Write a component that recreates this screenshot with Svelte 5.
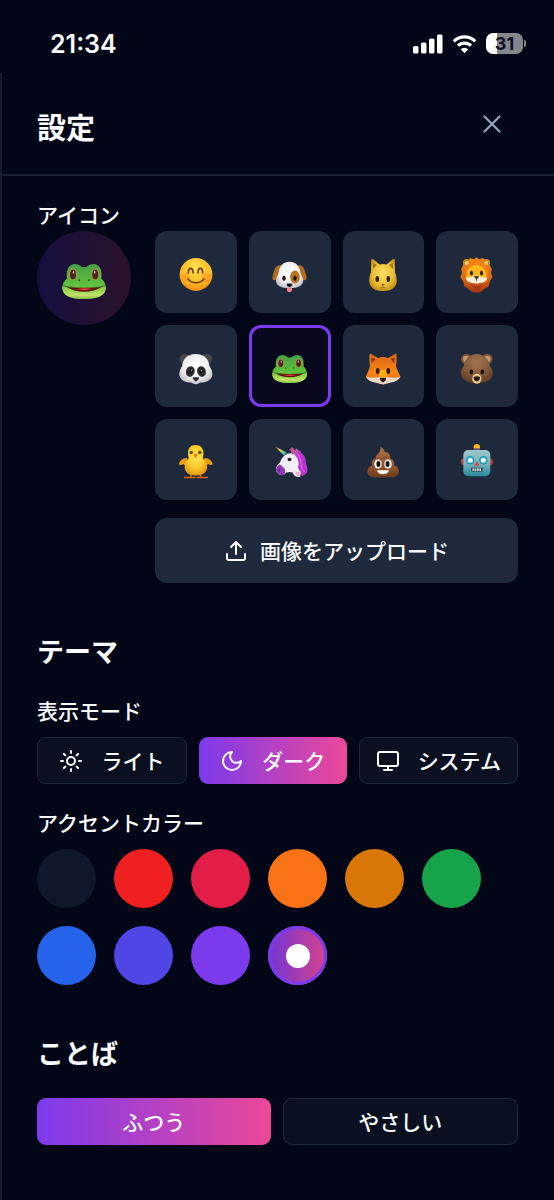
<script lang="ts">
	const avatars = [
		{ id: 'smile', label: 'にこにこ' },
		{ id: 'dog', label: 'いぬ' },
		{ id: 'cat', label: 'ねこ' },
		{ id: 'lion', label: 'ライオン' },
		{ id: 'panda', label: 'パンダ' },
		{ id: 'frog', label: 'かえる' },
		{ id: 'fox', label: 'きつね' },
		{ id: 'bear', label: 'くま' },
		{ id: 'chick', label: 'ひよこ' },
		{ id: 'unicorn', label: 'ユニコーン' },
		{ id: 'poop', label: 'うんち' },
		{ id: 'robot', label: 'ロボット' }
	];

	const modes = [
		{ id: 'light', label: 'ライト' },
		{ id: 'dark', label: 'ダーク' },
		{ id: 'system', label: 'システム' }
	];

	const accents = ['slate', 'red', 'rose', 'orange', 'amber', 'green', 'blue', 'indigo', 'violet', 'gradient'];

	const wordings = [
		{ id: 'normal', label: 'ふつう' },
		{ id: 'easy', label: 'やさしい' }
	];

	let avatar = $state('frog');
	let mode = $state('dark');
	let accent = $state('gradient');
	let wording = $state('normal');
</script>

{#snippet face(id: string)}
	<svg class="face" viewBox="0 0 36 36" aria-hidden="true">
		{#if id === 'smile'}
			<circle cx="18" cy="17.5" r="16.4" fill="url(#g-smile)" />
			<circle cx="7.5" cy="20.5" r="4.5" fill="#ff8a1f" opacity=".45" />
			<circle cx="28.5" cy="20.5" r="4.5" fill="#ff8a1f" opacity=".45" />
			<path d="M10.3 15.8q.3-4.4 2.4-4.4t2.4 4.4M19.9 15.8q.3-4.4 2.4-4.4t2.4 4.4" fill="none" stroke="#6b3d05" stroke-width="1.7" stroke-linecap="round" />
			<path d="M10 22q3 3.8 8 3.8t8-3.8" fill="none" stroke="#6b3d05" stroke-width="1.5" stroke-linecap="round" />
		{:else if id === 'dog'}
			<path d="M9.5 8.5Q4 7.5 2.5 13 .2 18.5.4 22q2 2.5 4.6.2L10 14Z" fill="#b06c1c" />
			<path d="M25.5 8.5Q31 7.5 32.5 13q2.3 5.5 2.1 9-2 2.5-4.6.2L25 14Z" fill="#b06c1c" />
			<path d="M17.5 4.8c6 0 9.8 3.7 10.7 10 .5 3.5 3 5.2 3 9 0 4.5-4.4 7.4-13.7 7.4S4 28.3 4 23.8c0-3.8 2.3-5.5 2.8-9 .9-6.3 4.7-10 10.7-10Z" fill="url(#g-white)" />
			<ellipse cx="23" cy="20" rx="4.8" ry="6.4" fill="#b9711d" />
			<ellipse cx="12" cy="21.3" rx="1.7" ry="2.8" fill="#24170f" />
			<ellipse cx="23" cy="21.3" rx="1.7" ry="2.8" fill="#24170f" />
			<path d="M14.8 26.5h5.4q.8 2.6-2.7 3.8-3.5-1.2-2.7-3.8Z" fill="#1b1717" />
			<path d="M15 30.7h5v2.5q-.4 2-2.5 2T15 33.2Z" fill="#f4808e" />
		{:else if id === 'cat'}
			<path d="M6.2 3q.5-2 2.3-.5L14.5 7.5q3.5-1 7 0l6-5q1.8-1.500 2.300.5l.2 12q2 4 1.800 9.500Q30.500 34 18 34T4.200 24.500Q4 19 6 15Z" fill="url(#g-cat)" />
			<path d="M7.8 5.5 8 12l4-4ZM28.2 5.5 28 12l-4-4Z" fill="#a97b10" />
			<ellipse cx="12.3" cy="22" rx="1.8" ry="3" fill="#33250b" />
			<ellipse cx="23.3" cy="22" rx="1.8" ry="3" fill="#33250b" />
			<path d="M16.3 27h3.4L18 29Z" fill="#8e4d1c" />
			<path d="M15.5 31q2 .4 2.5-1.4.5 1.8 2.5 1.4" fill="none" stroke="#8a5a0b" stroke-width=".8" />
		{:else if id === 'lion'}
			<path d="m17.5.2 2.500 2 4-1.200 2 2.300 4 1.200.8 3.800 2 3.700-.8 4 1.500 4-2.500 4-1.500 5.500-3.500 2-4.500 3.800-4 .4-4-.4-4.500-3.800-3.500-2L4 24l-2.800-4 1.800-4-.8-4 2-3.700L5 4.500l4-1.200L11 1l4 1.200Z" fill="url(#g-lion)" />
			<circle cx="7.5" cy="5.5" r="3.5" fill="#d18618" />
			<circle cx="27.5" cy="5.5" r="3.5" fill="#d18618" />
			<circle cx="7.8" cy="6" r="2" fill="#f3c76b" />
			<circle cx="27.2" cy="6" r="2" fill="#f3c76b" />
			<path d="M17.5 3Q7 5 5.500 16l4 9h16l4-9Q28 5 17.500 3Z" fill="#f18213" />
			<path d="M17.5 8c6 0 10 5 10 12q-3 5-10 5t-10-5c0-7 4-12 10-12Z" fill="#fdb81c" />
			<path d="M6.5 20q5.5 1.5 9-1.5h4q3.5 3 9 1.5-.5 6.5-11 6.500T6.500 20Z" fill="#fff1d8" />
			<ellipse cx="12.5" cy="16" rx="1.5" ry="2.6" fill="#33200e" />
			<ellipse cx="22.5" cy="16" rx="1.5" ry="2.6" fill="#33200e" />
			<path d="M15.2 19.5h4.6l-2.3 2.8Zm2.3 2.5v2.5" fill="#35200f" stroke="#35200f" stroke-width=".6" />
			<path d="M12 27.5q5.5 3 11 0L17.5 34Z" fill="#a33a15" />
		{:else if id === 'panda'}
			<circle cx="6.8" cy="8" r="5.3" fill="#45474c" />
			<circle cx="28.8" cy="8" r="5.3" fill="#45474c" />
			<path d="M17.8 3c8.7 0 13 5 13.6 12 1.5 2.5 3 4.5 3 8 0 6-6 8.5-11.5 8.5-1.5 0-2.5 1.8-5.1 1.8s-3.6-1.8-5.1-1.8C7.2 31.5 1.3 29 1.3 23c0-3.5 1.4-5.5 2.9-8C4.8 8 9 3 17.8 3Z" fill="url(#g-white)" />
			<ellipse cx="12.3" cy="20.5" rx="4.3" ry="5.4" transform="rotate(20 12.3 20.5)" fill="#292b2d" />
			<ellipse cx="23.5" cy="20.5" rx="4.3" ry="5.4" transform="rotate(-20 23.5 20.5)" fill="#292b2d" />
			<circle cx="13" cy="20.5" r="1.5" fill="#050505" />
			<circle cx="22.8" cy="20.5" r="1.5" fill="#050505" />
			<circle cx="13.4" cy="19.7" r=".6" fill="#ddd" />
			<circle cx="23.2" cy="19.7" r=".6" fill="#ddd" />
			<path d="M14.8 26.3h6.2q.3 2.3-3.1 4.2-3.4-1.9-3.1-4.2Z" fill="#2e3033" />
		{:else if id === 'frog'}
			<path d="M4 15.5C3 8 6 4 10.5 4c3.5 0 4.5 2.5 7.2 2.5S21.5 4 25 4c4.5 0 7.5 4 6.5 11.5 2.4 2 3.5 4.5 3.5 7.5 0 6-7.7 9-17.3 9S.3 29 .3 23c0-3 1.3-5.500 3.700-7.500Z" fill="url(#g-frog)" />
			<path d="M.3 22q8 2.5 17.4 2.5T35 22q1 10-17.3 10T.3 22Z" fill="url(#g-frog-jaw)" />
			<path d="M3.5 22.2Q17.7 23.6 31.9 22.2 26 26.2 17.7 26.2T3.5 22.2Z" fill="#5a170c" />
			<path d="M11.5 24q6.5-1.2 12.5 0-6 1.8-12.5 0Z" fill="#ed3932" />
			<path d="M1 21.3q3.5 1.3 8 1.5M34.4 21.3q-3.5 1.3-8 1.5" fill="none" stroke="#31641a" stroke-width=".7" />
			<ellipse cx="8.8" cy="12.2" rx="3.5" ry="4.8" fill="#a9914c" />
			<ellipse cx="26.6" cy="12.2" rx="3.5" ry="4.8" fill="#a9914c" />
			<ellipse cx="8.8" cy="12.3" rx="2.4" ry="3.8" fill="#48271c" />
			<ellipse cx="26.6" cy="12.3" rx="2.4" ry="3.8" fill="#48271c" />
			<ellipse cx="9.2" cy="10.6" rx=".6" ry="1.2" fill="#c4b7aa" />
			<ellipse cx="26.2" cy="10.6" rx=".6" ry="1.2" fill="#c4b7aa" />
			<ellipse cx="13.8" cy="17" rx=".6" ry=".8" fill="#1b4811" />
			<ellipse cx="21.6" cy="17" rx=".6" ry=".8" fill="#1b4811" />
		{:else if id === 'fox'}
			<path d="M4.5 3.2q.8-1.2 2 0L13 7q5-2 10 0l6.5-3.8q1.2-1.2 2 0 .5 6-.5 12 1.5 5 4.6 10.5-3 4.5-9 5.5L18 33.5 9.4 31.2q-6-1-8.6-5.5Q3.5 20.2 5 15.2q-1-6-.5-12Z" fill="url(#g-fox)" />
			<path d="m6.3 6.5.5 6 3.5-4.5ZM29.7 6.5l-.5 6L25.7 8Z" fill="#8b3109" />
			<path d="M.8 25.7q7 1.8 12.5.3L18 27l4.7-1q6 1.5 12.9-.3-3.5 5-10 5.8L18 33.5l-7.6-2Q4 30.7.8 25.7Z" fill="#e8d8ca" />
			<path d="m15.5 19-1.5 6 4 2 4-2-1.5-6Z" fill="#ffae18" />
			<ellipse cx="12.7" cy="20" rx="1.8" ry="2.9" fill="#2d1809" />
			<ellipse cx="23.3" cy="20" rx="1.8" ry="2.9" fill="#2d1809" />
			<path d="M15 27h6q.3 2.8-3 4.5-3.3-1.7-3-4.5Z" fill="#241612" />
		{:else if id === 'bear'}
			<circle cx="7.3" cy="8" r="5.3" fill="#7b5337" />
			<circle cx="28.3" cy="8" r="5.3" fill="#7b5337" />
			<circle cx="7.3" cy="8" r="3.2" fill="#c49a74" />
			<circle cx="28.3" cy="8" r="3.2" fill="#c49a74" />
			<path d="M17.8 3C25 3 30 8 30.8 15c2 2.5 3 4.5 3 7.5 0 5.5-5.5 9-10 9-2 0-3 1.5-6 1.5s-4-1.5-6-1.5c-4.5 0-10-3.5-10-9 0-3 1-5 3-7.5C5.6 8 10.6 3 17.8 3Z" fill="url(#g-bear)" />
			<ellipse cx="17.8" cy="27.8" rx="4.6" ry="5" fill="#ecc78c" />
			<ellipse cx="12.3" cy="20.8" rx="1.8" ry="2.6" fill="#20140d" />
			<ellipse cx="23.3" cy="20.8" rx="1.8" ry="2.6" fill="#20140d" />
			<path d="M14.6 26q3.2-1.5 6.4 0 .3 3-3.2 4.5-3.5-1.5-3.2-4.5Z" fill="#20150f" />
		{:else if id === 'chick'}
			<path d="M13 30v3M22.5 30v3M6.5 33.6H17M19 33.6h10.5" stroke="#dd661d" stroke-width="1.5" stroke-linecap="round" />
			<path d="M9 14Q2.5 13.5.8 20.5q3 1 4.5-.5 1.5 2 5 1.5ZM26.5 14q6.5-.5 8.2 6.5-3 1-4.5-.5-1.5 2-5 1.5Z" fill="#e69d12" />
			<path d="M17.5 1c5 0 8 3.5 8 8 0 2.5-.6 4-.6 5.500 3 2.500 4.300 5 4.300 8.500 0 5-4.500 8.500-11.500 8.500S6.600 28 6.600 23c0-3.500 1.300-6 4-8.500 0-1.500-.6-3-.6-5.500 0-4.500 2.500-8 7.500-8Z" fill="url(#g-chick)" />
			<circle cx="13.3" cy="8.5" r="1.8" fill="#5d5715" />
			<circle cx="21.7" cy="8.5" r="1.8" fill="#5d5715" />
			<path d="M15.6 10.5q1.9-1.6 3.8 0l-1.9 4Z" fill="#e27512" />
		{:else if id === 'unicorn'}
			<path d="M17 6q2.5-3.5 5-.5 5-1 8 4 4.5 3.5 3.8 10 2.7 4.5 1 9.5L30 32.5q-4-6-4.5-13L20 8Z" fill="#b935ce" />
			<path d="M23 7q6 5 6 13 0 5 3.5 8M21 8q5 4 5 11" fill="none" stroke="#e673ec" stroke-width="1" />
			<path d="M14.5 10q7-2.5 10.5 4 2.5 5 1 9 .3 3 3 5l-1 5q-6 .5-7.2-4.5Q15 27 12 30.5 7 32 4.3 27.5 2.500 23 8 18.500q2-6 6.500-8.500Z" fill="#f1eff5" />
			<path d="M7.5 20.500Q3 23 4.200 27.500q2.300 4.800 7.500 3.200 2-2 1.500-5-3-4.500-5.700-5.200Z" fill="#8d3bb4" />
			<ellipse cx="7" cy="26" rx=".8" ry="1.2" fill="#47156b" />
			<path d="m19 9 .5-6q3 1 3 6ZM23.5 9l1-5q2 1.5 1.2 6Z" fill="#b7667f" />
			<path d="M3 2.5 12 11.5l2.6-3Z" fill="url(#g-horn)" />
			<ellipse cx="17.5" cy="15.5" rx="2" ry="1.7" fill="#241a31" />
			<path d="M23.5 27q2.5 2 4.5.5l-.5 5q-4 0-4-5.5Z" fill="#f4a9c3" />
		{:else if id === 'poop'}
			<path d="M15.3 2.8c3 2 4.5 3 4.3 5 3.8.5 6.2 3 5.5 6.6 3.2.8 4.8 3.5 3.9 7 3.5.6 5 3 4.7 6 0 4-3.5 5.900-7 5.900H9.500c-4 0-7.200-1.800-7.200-5.800 0-3 1.700-5.300 4.900-6-1-3.500.4-6.400 3.500-7.200-.7-4 5.400-4.500 4.600-11.500Z" fill="url(#g-poop)" />
			<path d="M11 14.5q6 1.5 12.5-2M7.5 22q3 1.5 5 1.5" fill="none" stroke="#71401f" stroke-width="1" opacity=".7" />
			<ellipse cx="13" cy="20" rx="3.6" ry="4.5" fill="#fff" />
			<ellipse cx="23" cy="20" rx="3.6" ry="4.5" fill="#fff" />
			<ellipse cx="13.4" cy="20" rx="2" ry="2.9" fill="#18110d" />
			<ellipse cx="22.6" cy="20" rx="2" ry="2.9" fill="#18110d" />
			<path d="M12 26.3h12q-1 4-6 4t-6-4Z" fill="#fff" />
		{:else}
			<rect x="1.8" y="14.5" width="5" height="6.5" rx="2" fill="#b23b40" />
			<rect x="28.8" y="14.5" width="5" height="6.5" rx="2" fill="#b23b40" />
			<circle cx="17.8" cy="3.3" r="3.2" fill="#ffb51c" />
			<path d="M14.8 4.3h6V7h-6Z" fill="#674a72" />
			<rect x="4.3" y="6" width="27" height="26.3" rx="5" fill="url(#g-robot)" />
			<circle cx="11.3" cy="16.3" r="4.2" fill="#209bb5" />
			<circle cx="24.3" cy="16.3" r="4.2" fill="#209bb5" />
			<circle cx="11.3" cy="16.3" r="2.5" fill="#f5feff" />
			<circle cx="24.3" cy="16.3" r="2.5" fill="#f5feff" />
			<path d="m17.8 17 2.8 4.8H15Z" fill="#d64c51" />
			<rect x="12" y="23.8" width="11.6" height="3.8" rx="1" fill="#243c43" />
			<path d="M13.5 25.7h8.8" stroke="#fff" stroke-width="2.2" stroke-dasharray="1.6 .7" />
		{/if}
	</svg>
{/snippet}

<!-- shared gradients for the avatar faces -->
<svg class="defs" aria-hidden="true">
	<defs>
		<radialGradient id="g-smile" cx=".5" cy=".3" r=".7"><stop offset="0" stop-color="#ffe04f" /><stop offset=".65" stop-color="#fdbb24" /><stop offset="1" stop-color="#f58b12" /></radialGradient>
		<radialGradient id="g-white" cx=".5" cy=".4" r=".65"><stop offset="0" stop-color="#fff" /><stop offset=".6" stop-color="#eeeef1" /><stop offset="1" stop-color="#b9b9c1" /></radialGradient>
		<radialGradient id="g-cat" cx=".5" cy=".45" r=".6"><stop offset="0" stop-color="#fbdc62" /><stop offset=".6" stop-color="#ebc13a" /><stop offset="1" stop-color="#c18a10" /></radialGradient>
		<linearGradient id="g-lion" x2="0" y2="1"><stop offset="0" stop-color="#ee8715" /><stop offset=".6" stop-color="#dc6615" /><stop offset="1" stop-color="#9e3414" /></linearGradient>
		<linearGradient id="g-frog" x2="0" y2="1"><stop offset="0" stop-color="#479f45" /><stop offset=".5" stop-color="#5abd3c" /><stop offset="1" stop-color="#7ecd46" /></linearGradient>
		<linearGradient id="g-frog-jaw" x2="0" y2="1"><stop offset="0" stop-color="#7cc63f" /><stop offset=".7" stop-color="#c1e266" /><stop offset="1" stop-color="#83bd43" /></linearGradient>
		<linearGradient id="g-fox" x2="0" y2="1"><stop offset="0" stop-color="#dc6713" /><stop offset=".6" stop-color="#fb8416" /><stop offset="1" stop-color="#e56810" /></linearGradient>
		<radialGradient id="g-bear" cx=".5" cy=".3" r=".7"><stop offset="0" stop-color="#a57650" /><stop offset=".6" stop-color="#815838" /><stop offset="1" stop-color="#5d3b25" /></radialGradient>
		<radialGradient id="g-chick" cx=".5" cy=".4" r=".6"><stop offset="0" stop-color="#ffe755" /><stop offset=".6" stop-color="#fbca2b" /><stop offset="1" stop-color="#e59c14" /></radialGradient>
		<linearGradient id="g-horn" x2="1" y2="1"><stop offset="0" stop-color="#e7573c" /><stop offset=".4" stop-color="#f7e34d" /><stop offset=".7" stop-color="#4fd3a0" /><stop offset="1" stop-color="#5686ea" /></linearGradient>
		<linearGradient id="g-poop" x2="0" y2="1"><stop offset="0" stop-color="#a46e48" /><stop offset=".6" stop-color="#97592f" /><stop offset="1" stop-color="#6e3c1d" /></linearGradient>
		<linearGradient id="g-robot" x2="0" y2="1"><stop offset="0" stop-color="#9fc6cc" /><stop offset=".5" stop-color="#79b5bf" /><stop offset="1" stop-color="#28889a" /></linearGradient>
	</defs>
</svg>

<div class="status-bar">
	<time>21:34</time>
	<div class="status-icons">
		<svg width="30" height="20" viewBox="0 0 30 20" fill="#fff" aria-hidden="true">
			<rect x="0" y="12" width="5.5" height="7.5" rx="1.5" />
			<rect x="8" y="8.5" width="5.5" height="11" rx="1.5" />
			<rect x="16" y="4.5" width="5.5" height="15" rx="1.5" />
			<rect x="24" y=".5" width="5.5" height="19" rx="1.5" />
		</svg>
		<svg width="25" height="20" viewBox="0 0 26 20" fill="none" stroke="#fff" stroke-width="3.3" aria-hidden="true">
			<path d="M1.8 7.2a16 16 0 0 1 22.4 0M6.2 11.8a9.7 9.7 0 0 1 13.6 0" />
			<path d="m13 19.5-4-4a5.8 5.8 0 0 1 8 0Z" fill="#fff" stroke="none" />
		</svg>
		<div class="battery"><span>31</span></div>
	</div>
</div>

<main class="panel">
	<header>
		<h1>設定</h1>
		<button class="close" aria-label="閉じる">
			<svg width="30" height="30" viewBox="0 0 24 24" fill="none" stroke="currentColor" stroke-width="1.8" stroke-linecap="round" aria-hidden="true">
				<path d="M18 6 6 18M6 6l12 12" />
			</svg>
		</button>
	</header>

	<div class="content">
		<section>
			<h3>アイコン</h3>
			<div class="avatar-row">
				<div class="current">{@render face(avatar)}</div>
				<div class="picker">
					<div class="avatar-grid">
						{#each avatars as item (item.id)}
							<button
								class="avatar"
								class:selected={avatar === item.id}
								aria-label={item.label}
								aria-pressed={avatar === item.id}
								onclick={() => (avatar = item.id)}
							>
								{@render face(item.id)}
							</button>
						{/each}
					</div>
					<button class="upload">
						<svg class="icon" viewBox="0 0 24 24" aria-hidden="true">
							<path d="M21 15v4a2 2 0 0 1-2 2H5a2 2 0 0 1-2-2v-4M17 8l-5-5-5 5M12 3v12" />
						</svg>
						画像をアップロード
					</button>
				</div>
			</div>
		</section>

		<section>
			<h2>テーマ</h2>
			<h3>表示モード</h3>
			<div class="options">
				{#each modes as item (item.id)}
					<button class="option" class:selected={mode === item.id} aria-pressed={mode === item.id} onclick={() => (mode = item.id)}>
						<svg class="icon" viewBox="0 0 24 24" aria-hidden="true">
							{#if item.id === 'light'}
								<circle cx="12" cy="12" r="4" />
								<path d="M12 2v2M12 20v2M4.93 4.93l1.41 1.41M17.66 17.66l1.41 1.41M2 12h2M20 12h2M6.34 17.66l-1.41 1.41M19.07 4.93l-1.41 1.41" />
							{:else if item.id === 'dark'}
								<path d="M12 3a6 6 0 0 0 9 9 9 9 0 1 1-9-9Z" />
							{:else}
								<rect x="2" y="3" width="20" height="14" rx="2" />
								<path d="M8 21h8M12 17v4" />
							{/if}
						</svg>
						{item.label}
					</button>
				{/each}
			</div>

			<h3 class="accent-label">アクセントカラー</h3>
			<div class="accents">
				{#each accents as name (name)}
					<button
						class="accent {name}"
						class:selected={accent === name}
						aria-label={name}
						aria-pressed={accent === name}
						onclick={() => (accent = name)}
					></button>
				{/each}
			</div>
		</section>

		<section>
			<h2>ことば</h2>
			<div class="options">
				{#each wordings as item (item.id)}
					<button class="option" class:selected={wording === item.id} aria-pressed={wording === item.id} onclick={() => (wording = item.id)}>
						{item.label}
					</button>
				{/each}
			</div>
		</section>
	</div>
</main>

<style>
	:global(body) {
		background: #020617;
		color: #f8fafc;
		font-family: 'Noto Sans CJK JP', sans-serif;
	}

	button {
		box-sizing: border-box;
		margin: 0;
		padding: 0;
		border: 0;
		background: none;
		color: inherit;
		font: inherit;
		cursor: pointer;
	}

	svg {
		display: block;
	}

	.defs {
		position: absolute;
		width: 0;
		height: 0;
	}

	.status-bar {
		display: flex;
		align-items: center;
		justify-content: space-between;
		box-sizing: border-box;
		height: 73px;
		padding: 14px 31px 0 50px;
		font-family: Inter, sans-serif;
	}

	.status-bar time {
		font-size: 25px;
		font-weight: 600;
	}

	.status-icons {
		display: flex;
		align-items: center;
		gap: 9px;
	}

	.battery {
		position: relative;
		width: 37px;
		height: 21px;
		border-radius: 7px;
		background: linear-gradient(90deg, #fff 31%, #85868e 31%);
		color: #10131f;
		font-size: 18px;
		font-weight: 700;
		line-height: 21px;
		text-align: center;
	}

	.battery::after {
		content: '';
		position: absolute;
		top: 7px;
		right: -3px;
		width: 2px;
		height: 7px;
		border-radius: 0 2px 2px 0;
		background: #85868e;
	}

	.panel {
		border-left: 2px solid #151c2b;
	}

	header {
		display: flex;
		align-items: flex-end;
		justify-content: space-between;
		padding: 24px 35px 23px;
		border-bottom: 2px solid #1a2231;
	}

	h1,
	h2,
	h3 {
		margin: 0;
	}

	h1 {
		font-size: 29px;
		font-weight: 700;
		line-height: 50px;
	}

	h2 {
		margin-bottom: 25px;
		font-size: 27px;
		font-weight: 700;
		line-height: 40px;
	}

	h3 {
		font-size: 21px;
		font-weight: 500;
		line-height: 28px;
	}

	.close {
		padding: 12px;
		color: #94a3b8;
	}

	.content {
		display: flex;
		flex-direction: column;
		gap: 48px;
		padding: 24px 36px 56px 35px;
	}

	.avatar-row {
		display: flex;
		align-items: flex-start;
		gap: 24px;
		margin-top: 3px;
	}

	.current {
		display: flex;
		flex: none;
		align-items: center;
		justify-content: center;
		box-sizing: border-box;
		width: 94px;
		height: 94px;
		padding-top: 6px;
		border-radius: 50%;
		background: linear-gradient(90deg, #150f40, #2b122b);
	}

	.current .face {
		width: 45px;
		height: 45px;
	}

	.picker {
		flex: 1;
	}

	.avatar-grid {
		display: grid;
		grid-template-columns: repeat(4, 1fr);
		gap: 12px;
		margin-bottom: 18px;
	}

	.avatar {
		display: flex;
		align-items: center;
		justify-content: center;
		aspect-ratio: 1;
		padding-top: 6px;
		border-radius: 12px;
		background: #1e293b;
	}

	.avatar.selected {
		background: #08081f;
		box-shadow: inset 0 0 0 3px #7c3aed;
	}

	.face {
		width: 36px;
		height: 36px;
	}

	.icon {
		flex: none;
		width: 24px;
		height: 24px;
		fill: none;
		stroke: currentColor;
		stroke-width: 2;
		stroke-linecap: round;
		stroke-linejoin: round;
	}

	.upload {
		display: flex;
		align-items: center;
		justify-content: center;
		gap: 12px;
		width: 100%;
		padding: 17px;
		border-radius: 12px;
		background: #1e293b;
		font-size: 21px;
		font-weight: 500;
		line-height: 31px;
	}

	.options {
		display: flex;
		gap: 12px;
	}

	.option {
		display: flex;
		flex: 1;
		align-items: center;
		justify-content: center;
		gap: 18px;
		min-height: 47px;
		padding: 8px 16px;
		border: 1px solid #1e293b;
		border-radius: 9px;
		background: #0a101f;
		font-size: 21px;
		font-weight: 500;
		line-height: 29px;
		white-space: nowrap;
	}

	.option.selected {
		border: 0;
		background: linear-gradient(90deg, #7c3aed, #ec4899);
	}

	h3 + .options,
	.accents {
		margin-top: 13px;
	}

	.accent-label {
		margin-top: 24px;
	}

	.accents {
		display: flex;
		flex-wrap: wrap;
		gap: 18px;
	}

	.accent {
		display: flex;
		align-items: center;
		justify-content: center;
		width: 59px;
		height: 59px;
		border-radius: 50%;
	}

	.slate { background: #0f172a; }
	.red { background: #f02020; }
	.rose { background: #e11d48; }
	.orange { background: #f97316; }
	.amber { background: #d97706; }
	.green { background: #16a34a; }
	.blue { background: #2563eb; }
	.indigo { background: #4f46e5; }
	.violet { background: #7c3aed; }
	.gradient { background: linear-gradient(90deg, #6f35d5, #d8428c); }

	.accent.selected {
		box-shadow: inset 0 0 0 3px #7c3aed;
	}

	.accent.selected::after {
		content: '';
		width: 24px;
		height: 24px;
		border-radius: 50%;
		background: #fff;
	}
</style>
